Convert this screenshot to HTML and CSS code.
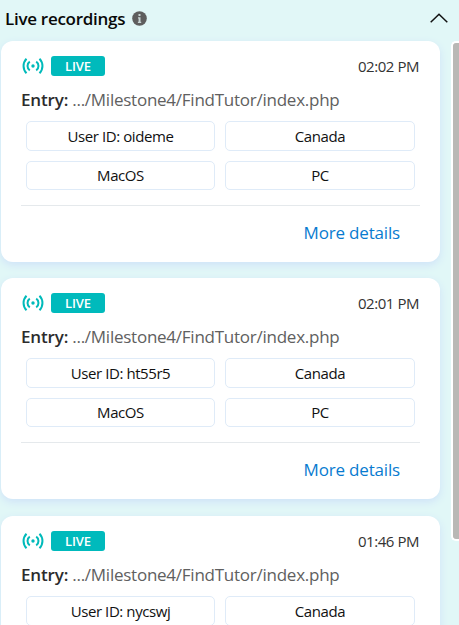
FILE: index.html
```html
<!DOCTYPE html>
<html lang="en">
<head>
<meta charset="utf-8">
<title>Live recordings</title>
<link rel="stylesheet" href="styles.css">
</head>
<body>
<svg class="defs" aria-hidden="true">
  <symbol id="broadcast" viewBox="0 0 22 18">
    <g fill="none" stroke="currentColor" stroke-width="2">
      <path d="M7.8 4.7a5.2 5.2 0 0 0 0 8.6M14.2 4.7a5.2 5.2 0 0 1 0 8.6M4.5 1.700a10.5 10.5 0 0 0 0 14.6M17.5 1.7a10.5 10.5 0 0 1 0 14.6"/>
    </g>
    <circle cx="11" cy="9" r="1.7" fill="currentColor"/>
  </symbol>
</svg>
<main class="panel">
  <header class="header">
    <h1 class="title">Live recordings</h1>
    <svg class="info" viewBox="0 0 15 15"><circle cx="7.5" cy="7.5" r="7.3" fill="#5e5e5e"/><path d="M6.500 3h2v2h-2zM6 6.300h2.500v4.500h.7V12H5.900v-1.200h.7V7.500H6z" fill="#c8d4d4"/></svg>
    <svg class="chevron" viewBox="0 0 18 10"><path d="M.7 9.2 9 1.2l8.300 8" fill="none" stroke="#111" stroke-width="1.5"/></svg>
  </header>
  <div class="body">
    <section class="list">
      <article class="card">
        <div class="top"><svg class="signal"><use href="#broadcast"/></svg><span class="badge">LIVE</span><time class="time">02:02 PM</time></div>
        <p class="entry"><b class="label">Entry:</b><span class="path">.../Milestone4/FindTutor/index.php</span></p>
        <div class="chips"><span class="chip">User ID: oideme</span><span class="chip">Canada</span><span class="chip">MacOS</span><span class="chip">PC</span></div>
        <footer class="footer"><a class="more">More details</a></footer>
      </article>
      <article class="card">
        <div class="top"><svg class="signal"><use href="#broadcast"/></svg><span class="badge">LIVE</span><time class="time">02:01 PM</time></div>
        <p class="entry"><b class="label">Entry:</b><span class="path">.../Milestone4/FindTutor/index.php</span></p>
        <div class="chips"><span class="chip">User ID: ht55r5</span><span class="chip">Canada</span><span class="chip">MacOS</span><span class="chip">PC</span></div>
        <footer class="footer"><a class="more">More details</a></footer>
      </article>
      <article class="card">
        <div class="top"><svg class="signal"><use href="#broadcast"/></svg><span class="badge">LIVE</span><time class="time">01:46 PM</time></div>
        <p class="entry"><b class="label">Entry:</b><span class="path">.../Milestone4/FindTutor/index.php</span></p>
        <div class="chips"><span class="chip">User ID: nycswj</span><span class="chip">Canada</span></div>
      </article>
    </section>
    <div class="track"><div class="thumb"></div></div>
  </div>
</main>
</body>
</html>
```
FILE: styles.css
```css
* { box-sizing: border-box; }
body { margin: 0; background: #e1f7f7; font-family: "Open Sans", "Noto Sans", sans-serif; color: #111; }
.defs { display: none; }
.panel { height: 625px; overflow: hidden; }
.header { display: flex; align-items: center; height: 41px; padding: 0 11px 4px 5px; }
.title { margin: 0; font-size: 17px; font-weight: 600; line-height: 24px; letter-spacing: -0.28px; color: #080808; white-space: nowrap; }
.info { width: 15px; height: 15px; margin-left: 7px; }
.chevron { width: 18px; height: 10px; margin-left: auto; margin-top: -2px; }
.body { display: flex; justify-content: space-between; height: 584px; }
.list { width: 439px; margin-left: 1px; display: flex; flex-direction: column; gap: 16.6px; }
.card { flex: none; height: 220.8px; padding: 15px 20px 0 20px; background: #fff; border-radius: 12px; box-shadow: 0 3px 8px #cfe2f8; }
.top { display: flex; align-items: center; height: 20px; }
.signal { width: 22px; height: 18px; margin-left: 1px; color: #00baba; }
.badge { width: 54px; height: 20px; margin-left: 7px; border-radius: 3px; background: #00babc; color: #fff; font-size: 13px; font-weight: 600; line-height: 20px; text-align: center; letter-spacing: -0.1px; }
.time { margin-left: auto; padding-right: 1px; font-size: 15px; letter-spacing: -0.45px; color: #333; white-space: nowrap; }
.entry { display: flex; gap: 4px; margin: 11px 0 9px; font-size: 17px; line-height: 25px; white-space: nowrap; }
.label { font-weight: 600; letter-spacing: -0.15px; color: #2c2c2c; }
.path { color: #606060; letter-spacing: -0.25px; }
.chips { display: grid; grid-template-columns: 189px 190px; grid-template-rows: 30px 29px; gap: 10px; padding-left: 5px; }
.chip { border: 1px solid #dfebf8; border-radius: 5px; font-size: 15px; line-height: 28px; text-align: center; letter-spacing: -0.42px; color: #111; }
.chip:nth-child(n+3) { line-height: 26px; }
.footer { margin-top: 15px; border-top: 1px solid #e5e9ec; padding: 13px 20px 0 0; text-align: right; }
.more { font-size: 17px; line-height: 27px; letter-spacing: -0.18px; color: #087bd0; }
.track { width: 7px; height: 584px; }
.thumb { width: 10px; height: 500px; margin-left: -1px; background: #b9b8b5; border: 2px solid #fff; border-right: 0; border-radius: 5px 0 0 5px; }
```
